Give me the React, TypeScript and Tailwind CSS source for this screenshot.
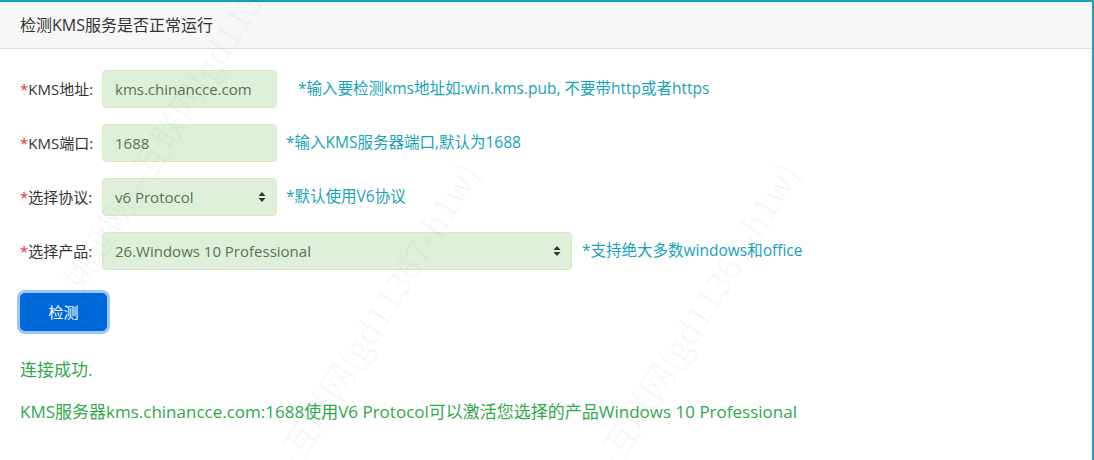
import React from 'react'

const font = { fontFamily: '"Open Sans", "Noto Sans CJK SC", sans-serif' }

const marks = [
  'left-[-40px] top-[60px]',
  'left-[110px] top-[340px]',
  'left-[430px] top-[340px]',
]

const Arrows = () => (
  <svg width="8" height="12" viewBox="0 0 8 12" className="shrink-0">
    <path d="M4 1 L7.5 5 H0.5 Z" fill="#333" />
    <path d="M4 11 L7.5 7 H0.5 Z" fill="#333" />
  </svg>
)

const Label = ({ text }: { text: string }) => (
  <label className="w-[82px] shrink-0 text-[15px] text-[#333]">
    <span className="text-[#dc3545]">*</span>
    {text}
  </label>
)

const Help = ({ text, className }: { text: string; className: string }) => (
  <span className={`text-[15.5px] text-[#17a2b8] ${className}`}>{text}</span>
)

export default function App() {
  return (
    <div className="relative h-[460px] w-[1094px] overflow-hidden bg-white" style={font}>
      <div className="h-full border-t-2 border-r-2 border-[#17a2b8]">
        {/* header */}
        <div className="flex h-[47px] items-center border-b border-[#dcdcdc] bg-[#f7f7f7] px-5 text-[16px] text-[#333]">
          检测KMS服务是否正常运行
        </div>

        {/* form */}
        <div className="flex flex-col gap-4 pl-5 pt-[21px]">
          <div className="flex h-[38px] items-center">
            <Label text="KMS地址:" />
            <div className="flex h-[38px] w-[175px] items-center rounded border border-[#d6e9c6] bg-[#dff0d8] px-3 text-[15px] text-[#5a7257]">
              kms.chinancce.com
            </div>
            <Help text="*输入要检测kms地址如:win.kms.pub, 不要带http或者https" className="ml-[21px]" />
          </div>

          <div className="flex h-[38px] items-center">
            <Label text="KMS端口:" />
            <div className="flex h-[38px] w-[175px] items-center rounded border border-[#d6e9c6] bg-[#dff0d8] px-3 text-[15px] text-[#5a7257]">
              1688
            </div>
            <Help text="*输入KMS服务器端口,默认为1688" className="ml-[9px]" />
          </div>

          <div className="flex h-[38px] items-center">
            <Label text="选择协议:" />
            <div className="flex h-[38px] w-[175px] items-center justify-between rounded border border-[#d6e9c6] bg-[#dff0d8] pl-3 pr-[10px] text-[15px] text-[#5a7257]">
              <span>v6 Protocol</span>
              <Arrows />
            </div>
            <Help text="*默认使用V6协议" className="ml-[9px]" />
          </div>

          <div className="flex h-[38px] items-center">
            <Label text="选择产品:" />
            <div className="flex h-[38px] w-[470px] items-center justify-between rounded border border-[#d6e9c6] bg-[#dff0d8] pl-3 pr-[10px] text-[15px] text-[#5a7257]">
              <span>26.Windows 10 Professional</span>
              <Arrows />
            </div>
            <Help text="*支持绝大多数windows和office" className="ml-[10px]" />
          </div>
        </div>

        {/* submit */}
        <div className="pl-5 pt-[23px]">
          <button className="h-[38px] w-[87px] rounded-[5px] bg-[#0069d9] text-[15px] text-white ring-[3px] ring-[#9cc8f5]">
            检测
          </button>
        </div>

        {/* result */}
        <div className="flex flex-col gap-[18px] pl-5 pt-[27px] text-[17px] leading-[24px] text-[#30a84a]">
          <p>连接成功.</p>
          <p>KMS服务器kms.chinancce.com:1688使用V6 Protocol可以激活您选择的产品Windows 10 Professional</p>
        </div>
      </div>

      {/* watermark */}
      {marks.map((pos, i) => (
        <span
          key={i + 'wm'}
          className={`pointer-events-none absolute ${pos} -rotate-[58deg] whitespace-nowrap text-[34px] text-black/[0.035]`}
          style={{ fontFamily: '"Noto Sans CJK SC", serif' }}
        >
          姚延刚—互联网(gd11367-h1w)
        </span>
      ))}
    </div>
  )
}
